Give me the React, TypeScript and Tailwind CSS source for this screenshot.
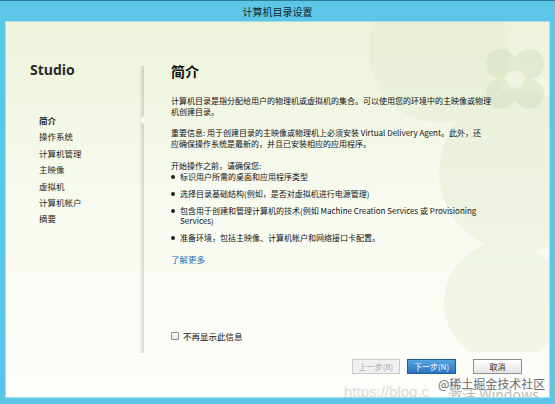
import React from "react";

const cjk = "font-['Noto_Sans_CJK_SC','Noto_Sans',sans-serif]";

const steps = ["简介", "操作系统", "计算机管理", "主映像", "虚拟机", "计算机帐户", "摘要"];

const bullets: React.ReactNode[] = [
  "标识用户所需的桌面和应用程序类型",
  "选择目录基础结构(例如，是否对虚拟机进行电源管理)",
  <>
    包含用于创建和管理计算机的技术(例如 Machine Creation Services 或 Provisioning
    <br />
    Services)
  </>,
  "准备环境，包括主映像、计算机帐户和网络接口卡配置。",
];

function Decoration() {
  return (
    <svg
      className="pointer-events-none absolute right-0 top-0"
      width="260"
      height="330"
      viewBox="0 0 260 330"
    >
      <g fill="#e2eacd" opacity="0.4">
        <circle cx="150" cy="30" r="70" />
        <circle cx="230" cy="150" r="80" />
        <circle cx="215" cy="280" r="60" />
      </g>
      <g fill="#d3dfbc" opacity="0.45">
        <circle cx="212" cy="42" r="15" />
        <circle cx="240" cy="42" r="15" />
        <circle cx="212" cy="72" r="15" />
        <circle cx="240" cy="72" r="15" />
      </g>
      <circle cx="226" cy="57" r="9" fill="#f0f4e2" opacity="0.8" />
    </svg>
  );
}

function Sidebar() {
  return (
    <div className="flex w-[138px] shrink-0">
      <div className="flex-1 pl-[24px] pt-[39px]">
        <div className="font-['Open_Sans',sans-serif] text-[14px] font-bold leading-[18px] text-[#2a2a2a]">
          Studio
        </div>
        <ul className="mt-[33px] pl-[9px] text-[8.5px] leading-[16.4px] text-[#1e1e1e]">
          {steps.map((s, i) => (
            <li key={s} className={i === 0 ? "font-bold" : ""}>
              {s}
            </li>
          ))}
        </ul>
      </div>
      <div className="relative my-[44px] w-[5px] bg-gradient-to-r from-transparent to-black/15">
        <div className="absolute right-0 top-[50px] h-0 w-0 border-y-[4px] border-r-[4px] border-y-transparent border-r-white" />
      </div>
    </div>
  );
}

export default function App() {
  return (
    <div
      className={`relative flex h-[404px] w-[555px] flex-col overflow-hidden border-t border-[#2b7d97] bg-[#5cc6e6] ${cjk}`}
    >
      <div className="flex h-[20px] shrink-0 items-center justify-center text-[10px] text-[#15262c]">
        计算机目录设置
      </div>

      <div className="relative mx-[5px] mb-[6px] flex flex-1 overflow-hidden border border-[#a9dcec] bg-gradient-to-b from-[#edf3d9] via-[#f8fbf1] to-[#fdfdfa]">
        <Decoration />
        <Sidebar />

        <div className="relative flex flex-1 flex-col pl-[27px] pr-[27px] pt-[39px] pb-[23px] text-[#111]">
          <h1 className="text-[14px] font-bold leading-[20px] text-[#111]">简介</h1>

          <div className="mt-[15px] w-[330px] text-[8px] leading-[10.5px]">
            <p>
              计算机目录是指分配给用户的物理机或虚拟机的集合。可以使用您的环境中的主映像或物理
              <br />
              机创建目录。
            </p>
            <p className="mt-[11px]">
              重要信息: 用于创建目录的主映像或物理机上必须安装 Virtual Delivery Agent。此外，还
              <br />
              应确保操作系统是最新的，并且已安装相应的应用程序。
            </p>
            <p className="mt-[12px]">开始操作之前，请确保您:</p>
            <ul className="flex flex-col gap-[6.5px]">
              {bullets.map((b, i) => (
                <li key={i} className="flex">
                  <span className="flex h-[10.5px] w-[9px] shrink-0 items-center">
                    <span className="h-[4px] w-[4px] rounded-full bg-[#222]" />
                  </span>
                  <span>{b}</span>
                </li>
              ))}
            </ul>
            <a className="mt-[10px] block text-[8.5px] text-[#1a6fbf]">了解更多</a>
          </div>

          <div className="flex-1" />

          <label className="flex items-center gap-[4px] text-[8.5px] leading-[12px]">
            <span className="h-[8px] w-[8px] rounded-[1px] border border-[#8a8a8a] bg-gradient-to-b from-white to-[#e8e8e8]" />
            不再显示此信息
          </label>

          <div className="mt-[17px] flex justify-end text-[8px]">
            <button className="flex h-[15px] w-[48px] items-center justify-center border border-[#c9c9c9] bg-[#f0f0f0] text-[#a9a9a9]">
              上一步(B)
            </button>
            <button className="ml-[7px] flex h-[15px] w-[49px] items-center justify-center border border-[#1c5d9c] bg-gradient-to-b from-[#55a6e2] to-[#2a74bd] text-white">
              下一步(N)
            </button>
            <button className="ml-[17px] flex h-[15px] w-[49px] items-center justify-center border border-[#8f8f8f] bg-gradient-to-b from-white to-[#e3e3e3] text-[#1d1d1d]">
              取消
            </button>
          </div>
        </div>

        <div className="pointer-events-none absolute bottom-[-6px] left-[338px] font-['Liberation_Sans',sans-serif] text-[15px] text-[#cfd2d2]/80">
          https://blog.c
        </div>
        <div className="pointer-events-none absolute bottom-[-8px] left-[442px] text-[14px] text-[#9a9a9a]/70">
          激活 Windows
        </div>
        <div className="pointer-events-none absolute bottom-[4px] left-[432px] text-[12px] text-[#6a6a6a] [text-shadow:0_0_2px_#fff]">
          @稀土掘金技术社区
        </div>
      </div>
    </div>
  );
}
